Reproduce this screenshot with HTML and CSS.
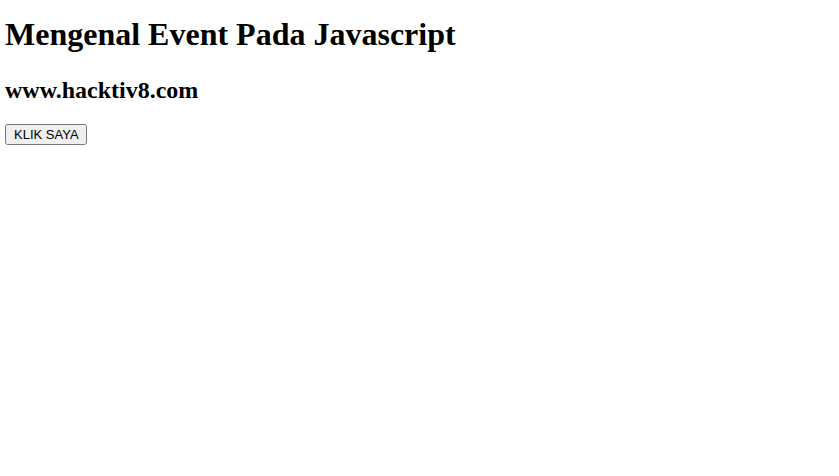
FILE: index.html
```html
<!DOCTYPE html>
<html>
<head>
<meta charset="utf-8">
<link rel="stylesheet" href="styles.css">
</head>
<body class="page">
<h1 class="title">Mengenal Event Pada Javascript</h1>
<h2 class="subtitle">www.hacktiv8.com</h2>
<button class="btn">KLIK SAYA</button>
</body>
</html>
```
FILE: styles.css
```css
.page {
  margin: 5px;
  font-family: "Liberation Serif", serif;
  background: #fff;
  color: #000;
}
.title {
  font-size: 32px;
  margin: 11px 0 24px;
}
.subtitle {
  font-size: 24px;
  margin: 20px 0;
}
.btn {
  font-family: "Liberation Sans", Arial, sans-serif;
  font-size: 13px;
  padding: 1px 6px 1px 7px;
}
```
